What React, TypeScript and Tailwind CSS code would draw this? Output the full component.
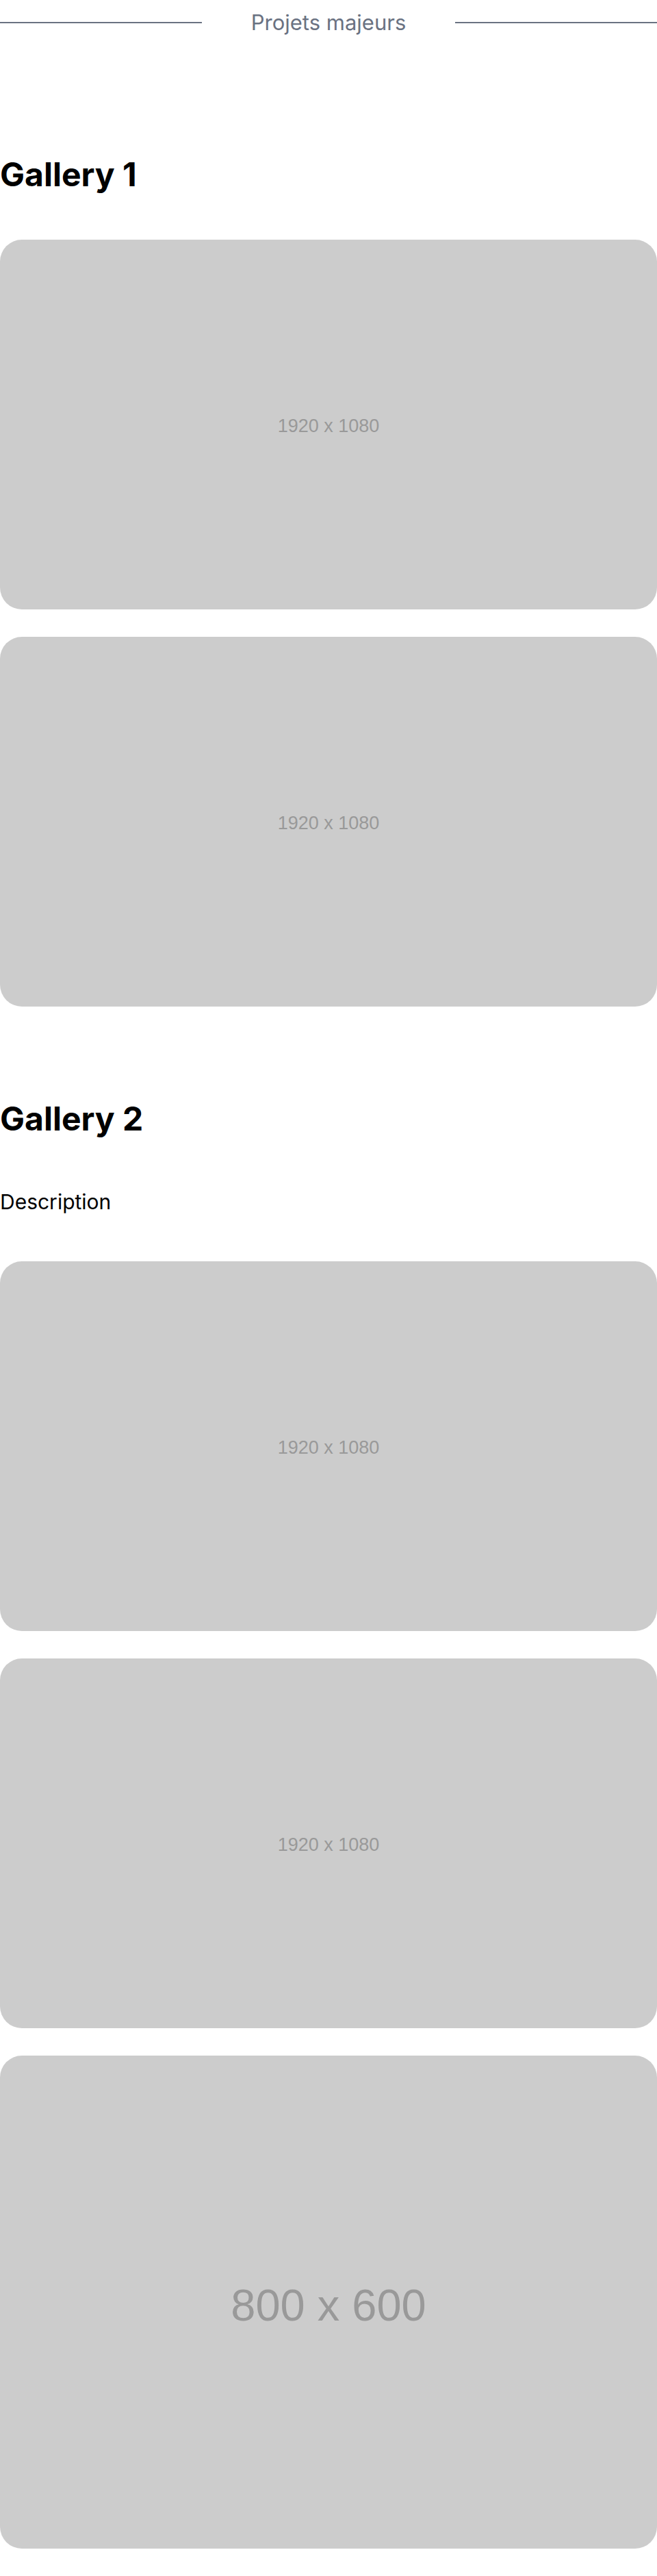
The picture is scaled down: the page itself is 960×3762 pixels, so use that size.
const galleries = [
  {
    title: 'Gallery 1',
    description: '',
    images: [
      { label: '1920 x 1080', h: 'h-[540px]', text: 'text-[27px] pt-[4px]' },
      { label: '1920 x 1080', h: 'h-[540px]', text: 'text-[27px] pt-[4px]' },
    ],
  },
  {
    title: 'Gallery 2',
    description: 'Description',
    images: [
      { label: '1920 x 1080', h: 'h-[540px]', text: 'text-[27px] pt-[4px]' },
      { label: '1920 x 1080', h: 'h-[540px]', text: 'text-[27px] pt-[4px]' },
      { label: '800 x 600', h: 'h-[720px]', text: 'text-[65px] pt-[10px]' },
    ],
  },
]

function Placeholder({ label, h, text }: { label: string; h: string; text: string }) {
  return (
    <div className={`w-full ${h} rounded-4xl bg-[#cccccc] flex items-center justify-center`}>
      <span className={`${text} text-[#999999] font-['Liberation_Sans',Arial,sans-serif]`}>{label}</span>
    </div>
  )
}

export default function App() {
  return (
    <div className="w-[960px] bg-white text-black font-['Inter',sans-serif] pb-10">
      {/* Section title */}
      <div className="h-[66px] flex items-center">
        <div className="flex-1 h-0.5 bg-gray-500" />
        <span className="mx-[72px] text-[31px] leading-9 text-gray-500">Projets majeurs</span>
        <div className="flex-1 h-0.5 bg-gray-500" />
      </div>

      {galleries.map((g, i) => (
        <section key={g.title} className={i === 0 ? 'mt-[165px]' : 'mt-[140px]'}>
          <h2 className="text-5xl leading-none font-bold">{g.title}</h2>
          {g.description && (
            <p className="mt-[79px] text-3xl leading-9">{g.description}</p>
          )}
          <div className={`${g.description ? 'mt-[69px]' : 'mt-[71px]'} flex flex-col gap-10`}>
            {g.images.map((img, j) => (
              <Placeholder key={j} {...img} />
            ))}
          </div>
        </section>
      ))}
    </div>
  )
}
